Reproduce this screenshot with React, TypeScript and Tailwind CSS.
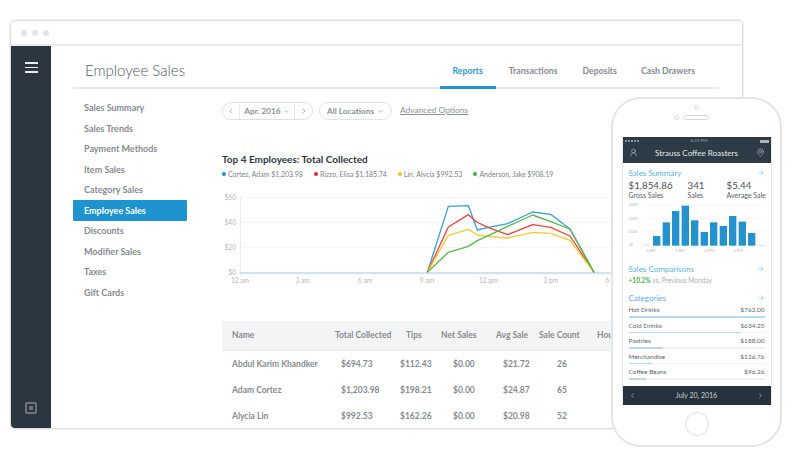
import React from 'react';
import { ArrowRight, ChevronDown, ChevronLeft, ChevronRight, MapPin, UserRound } from 'lucide-react';

const navItems = [
  'Sales Summary',
  'Sales Trends',
  'Payment Methods',
  'Item Sales',
  'Category Sales',
  'Employee Sales',
  'Discounts',
  'Modifier Sales',
  'Taxes',
  'Gift Cards',
];

const legend = [
  { label: 'Cortez, Adam $1,203.98', dot: 'bg-[#1b93d0]' },
  { label: 'Rizzo, Elisa $1,185.74', dot: 'bg-[#e8282c]' },
  { label: 'Lin, Alycia $992.53', dot: 'bg-[#fbbf24]' },
  { label: 'Anderson, Jake $908.19', dot: 'bg-[#3cb043]' },
];

const rows = [
  ['Abdul Karim Khandker', '$694.73', '$112.43', '$0.00', '$21.72', '26'],
  ['Adam Cortez', '$1,203.98', '$198.21', '$0.00', '$24.87', '65'],
  ['Alycia Lin', '$992.53', '$162.26', '$0.00', '$20.98', '52'],
];

const lines = [
  { color: '#3a9fd8', points: '652,277 715,79 775,77 802,150 835,142 893,131 968,96 1022,103 1080,147 1152,277' },
  { color: '#ee4340', points: '652,277 715,141 775,104 800,126 835,143 893,164 968,134 1022,142 1080,168 1152,277' },
  { color: '#fdc830', points: '652,277 715,166 775,148 802,165 835,169 893,174 968,157 1022,160 1080,181 1152,277' },
  { color: '#58b84a', points: '652,277 715,217 775,199 802,182 835,167 893,139 968,105 1022,125 1080,147 1152,277' },
];

const bars = [
  [126, 438], [155, 397], [183, 363], [212, 347], [240, 391], [269, 426],
  [297, 397], [326, 408], [354, 378], [383, 395], [411, 429],
];

const categories = [
  { name: 'Hot Drinks', amount: '$762.00', fill: '100%' },
  { name: 'Cold Drinks', amount: '$634.25', fill: '83%' },
  { name: 'Pastries', amount: '$188.00', fill: '25%' },
  { name: 'Merchandise', amount: '$126.76', fill: '17%' },
  { name: 'Coffee Beans', amount: '$96.26', fill: '13%' },
];

const SalesChart = () => (
  <svg width="420" height="110" viewBox="0 0 1260 330" className="absolute left-[-12px] top-0">
    {[52, 127, 202].map((y) => (
      <line key={y} x1="90" x2="1260" y1={y} y2={y} stroke="#f3f4f5" strokeWidth="3" />
    ))}
    <line x1="91" x2="91" y1="52" y2="285" stroke="#e6e8ea" strokeWidth="3" />
    <line x1="90" x2="1260" y1="279" y2="279" stroke="#b5dcf0" strokeWidth="5" />
    {[
      ['$60', 52],
      ['$40', 127],
      ['$20', 202],
      ['$0', 277],
    ].map(([label, y]) => (
      <text key={label} x="78" y={Number(y) + 7} textAnchor="end" fontSize="20" fill="#b4b8bc">
        {label}
      </text>
    ))}
    {[
      ['12 am', 90],
      ['3 am', 278],
      ['6 am', 465],
      ['9 am', 651],
      ['12 pm', 835],
      ['3 pm', 1022],
      ['6 pm', 1208],
    ].map(([label, x]) => (
      <text key={label} x={x} y="308" textAnchor="middle" fontSize="20" fill="#b4b8bc">
        {label}
      </text>
    ))}
    {lines.map((l) => (
      <polyline key={l.color} points={l.points} fill="none" stroke={l.color} strokeWidth="4" strokeLinejoin="round" />
    ))}
  </svg>
);

const PhoneChart = () => (
  <svg width="150" height="60" viewBox="33 330 450 180" className="-mx-[7px] block max-w-none">
    {[345, 385, 424, 463].map((y) => (
      <line key={y} x1="90" x2="465" y1={y} y2={y} stroke="#f0f1f2" strokeWidth="2" />
    ))}
    {[
      ['$300', 345],
      ['$200', 385],
      ['$100', 424],
      ['$0', 463],
    ].map(([label, y]) => (
      <text key={label} x="54" y={Number(y) + 4} fontSize="11" fill="#b4b8bc">
        {label}
      </text>
    ))}
    <rect x="97" y="465" width="22" height="2" fill="#c3e2f2" />
    <rect x="440" y="465" width="22" height="2" fill="#c3e2f2" />
    {bars.map(([x, top]) => (
      <rect key={x} x={x} y={top} width="22" height={467 - top} fill="#2493cd" />
    ))}
    {[
      ['6 AM', 120],
      ['9 AM', 207],
      ['12 PM', 295],
      ['3 PM', 381],
    ].map(([label, x]) => (
      <text key={label} x={x} y="485" textAnchor="middle" fontSize="11" fill="#b4b8bc">
        {label}
      </text>
    ))}
  </svg>
);

const SectionHead = ({ title }: { title: string }) => (
  <div className="flex h-[12px] items-center justify-between text-[8px] text-[#5db0de]">
    <span>{title}</span>
    <ArrowRight size={8} strokeWidth={1.5} />
  </div>
);

const Stat = ({ value, label }: { value: string; label: string }) => (
  <div className="text-[#5a6168]">
    <div className="text-[9.75px] leading-[11px] text-[#4b5259]">{value}</div>
    <div className="whitespace-nowrap text-[7px] leading-[8px]">{label}</div>
  </div>
);

const Phone = () => (
  <div className="absolute left-[611px] top-[97px] flex h-[350px] w-[171px] flex-col items-center rounded-[30px] border-2 border-[#e3e4e5] bg-white">
    <div className="mt-[6px] h-[5px] w-[5px] rounded-full border border-[#d5d7d9]" />
    <div className="mt-[5px] flex items-center">
      <div className="mr-[5px] h-[5px] w-[5px] rounded-full border border-[#d5d7d9]" />
      <div className="h-[5px] w-[25px] rounded-full border border-[#d5d7d9]" />
      <div className="w-[10px]" />
    </div>
    <div className="mt-[17px] flex h-[268px] w-[150px] flex-col border-x border-[#e6e8ea]">
      <div className="h-[26px] bg-[#2d3b46] text-white">
        <div className="flex h-[8px] items-center justify-between px-[2px] text-[4.5px] text-[#9aa3aa]">
          <span className="flex gap-[1px]">
            {[0, 1, 2, 3, 4].map((i) => (
              <i key={i} className="h-[2px] w-[2px] rounded-full bg-[#aab1b7]" />
            ))}
          </span>
          <span>6:23 PM</span>
          <span className="h-[3px] w-[9px] bg-[#aab1b7]" />
        </div>
        <div className="flex h-[15px] items-center justify-between px-[6px]">
          <UserRound size={9} strokeWidth={1.4} className="text-[#c7ccd0]" />
          <span className="text-[8px] text-[#e4e7e9]">Strauss Coffee Roasters</span>
          <MapPin size={9} strokeWidth={1.4} className="text-[#c7ccd0]" />
        </div>
      </div>

      <div className="flex flex-1 flex-col px-[6px] pt-[4px]">
        <SectionHead title="Sales Summary" />
        <div className="mt-[1px] grid grid-cols-[59px_39px_1fr]">
          <Stat value="$1,854.86" label="Gross Sales" />
          <Stat value="341" label="Sales" />
          <Stat value="$5.44" label="Average Sale" />
        </div>
        <div className="mt-[1px]">
          <PhoneChart />
        </div>
        <div className="mt-[3px]">
          <SectionHead title="Sales Comparisons" />
        </div>
        <div className="h-[10px] text-[6.6px] leading-[10px] text-[#a8adb2]">
          <span className="font-bold text-[#4cae4f]">+10.2%</span> vs. Previous Monday
        </div>
        <div className="mt-[7px]">
          <SectionHead title="Categories" />
        </div>
        {categories.map((c) => (
          <div key={c.name} className="h-[15.5px]">
            <div className="flex h-[12px] items-center justify-between text-[6.5px] text-[#5e656b]">
              <span>{c.name}</span>
              <span>{c.amount}</span>
            </div>
            <div className="h-[1.5px] bg-[#f0f1f2]">
              <div className="h-full bg-[#b3dcf2]" style={{ width: c.fill }} />
            </div>
          </div>
        ))}
      </div>

      <div className="flex h-[19px] items-center justify-between bg-[#26333e] px-[6px] text-[#c9ced2]">
        <ChevronLeft size={7} />
        <span className="text-[7px]">July 20, 2016</span>
        <ChevronRight size={7} />
      </div>
    </div>
    <div className="mt-[7px] h-[24px] w-[24px] rounded-full border border-[#dcdee0]" />
  </div>
);

const columns = 'grid grid-cols-[103px_65px_41px_55px_43px_58px_60px] items-center pl-[10px]';

export default function App() {
  return (
    <div className="relative h-[476px] w-[796px] overflow-hidden bg-white pl-[10px] pt-[20px] font-['Lato','Liberation_Sans',sans-serif]">
      <div className="flex h-[409px] w-[733px] flex-col overflow-hidden rounded-[5px] border border-[#dfe0e1] shadow-[0_0_0_1px_#f0f0f0]">
        <div className="flex h-[25px] items-center gap-[5px] border-b-2 border-[#e9eaeb] pl-[10px]">
          <i className="h-[6px] w-[6px] rounded-full bg-[#e3e4e5]" />
          <i className="h-[6px] w-[6px] rounded-full bg-[#e3e4e5]" />
          <i className="h-[6px] w-[6px] rounded-full bg-[#e3e4e5]" />
        </div>

        <div className="flex min-h-0 flex-1">
          <aside className="flex w-[40px] flex-col items-center justify-between bg-[#2c3640] pb-[14px] pt-[16px]">
            <div className="flex w-[13px] flex-col gap-[3px]">
              <i className="h-[1.5px] bg-[#e9ebec]" />
              <i className="h-[1.5px] bg-[#e9ebec]" />
              <i className="h-[1.5px] bg-[#e9ebec]" />
            </div>
            <div className="flex h-[12px] w-[12px] items-center justify-center rounded-[2px] border-2 border-[#6c747c]">
              <i className="h-[4px] w-[4px] bg-[#6c747c]" />
            </div>
          </aside>

          <main className="min-w-0 flex-1 pl-[22px]">
            <header className="flex h-[43px] w-[645px] items-end justify-between border-b-2 border-[#e8e9ea]">
              <h1 className="mb-[5px] ml-[12px] text-[15px] leading-[24px] font-light text-[#55595e]">Employee Sales</h1>
              <nav className="flex items-end pr-[23px] text-[8.75px] font-bold text-[#868b90]">
                <span className="mb-[-2px] flex h-[26px] w-[56px] justify-center border-b-[3px] border-[#1f93cf] pt-[1px] text-[#2a9ad6]">Reports</span>
                <span className="mb-[-2px] ml-[13px] h-[26px] pt-[1px]">Transactions</span>
                <span className="mb-[-2px] ml-[25px] h-[26px] pt-[1px]">Deposits</span>
                <span className="mb-[-2px] ml-[24px] h-[26px] pt-[1px]">Cash Drawers</span>
              </nav>
            </header>

            <div className="flex">
              <ul className="w-[114px] pt-[8.5px] text-[9px] font-bold text-[#868b90]">
                {navItems.map((item) => (
                  <li
                    key={item}
                    className={`flex h-[20.5px] items-center pl-[11px] ${
                      item === 'Employee Sales' ? 'rounded-[1px] bg-[#1d94cf] text-white' : ''
                    }`}
                  >
                    {item}
                  </li>
                ))}
              </ul>

              <section className="ml-[35px] w-[480px] pt-[13px]">
                <div className="flex h-[18px] items-center text-[8.25px] text-[#8b9095]">
                  <div className="flex h-[18px] w-[91px] items-center rounded-full border border-[#dfe1e3]">
                    <span className="flex h-full w-[17px] items-center justify-center border-r border-[#e6e8ea]">
                      <ChevronLeft size={8} />
                    </span>
                    <span className="flex h-full flex-1 items-center justify-center gap-[2px] font-bold">
                      Apr. 2016 <ChevronDown size={7} />
                    </span>
                    <span className="flex h-full w-[18px] items-center justify-center border-l border-[#e6e8ea]">
                      <ChevronRight size={8} />
                    </span>
                  </div>
                  <div className="ml-[6px] flex h-[18px] w-[73px] items-center justify-center gap-[3px] rounded-full border border-[#dfe1e3] font-bold">
                    All Locations <ChevronDown size={7} />
                  </div>
                  <span className="mb-[2px] ml-[8px] text-[8.4px] underline">Advanced Options</span>
                </div>

                <h2 className="mt-[32px] text-[10px] leading-[14px] font-bold text-[#2f3740]">Top 4 Employees: Total Collected</h2>
                <div className="mt-[2px] flex h-[12px] items-center gap-[11px] text-[7px] text-[#7d8388]">
                  {legend.map((l) => (
                    <span key={l.label} className="flex items-center gap-[2px] whitespace-nowrap">
                      <i className={`h-[4px] w-[4px] rounded-full ${l.dot}`} />
                      {l.label}
                    </span>
                  ))}
                </div>

                <div className="relative h-[110px] w-[388px]">
                  <SalesChart />
                </div>

                <div className="mt-[31px] w-[420px] text-[8.5px] font-bold text-[#868b90]">
                  <div className={`${columns} h-[30px] border-b border-[#e9eaeb] bg-[#f3f4f6]`}>
                    <span>Name</span>
                    <span>Total Collected</span>
                    <span className="pl-[6px]">Tips</span>
                    <span>Net Sales</span>
                    <span>Avg Sale</span>
                    <span>Sale Count</span>
                    <span>Hours</span>
                  </div>
                  {rows.map((r) => (
                    <div key={r[0]} className={`${columns} h-[26px]`}>
                      <span className="whitespace-nowrap">{r[0]}</span>
                      <span className="pl-[6px]">{r[1]}</span>
                      <span>{r[2]}</span>
                      <span className="pl-[12px]">{r[3]}</span>
                      <span className="pl-[7px]">{r[4]}</span>
                      <span className="pl-[18px]">{r[5]}</span>
                    </div>
                  ))}
                </div>
              </section>
            </div>
          </main>
        </div>
      </div>

      <Phone />
    </div>
  );
}
